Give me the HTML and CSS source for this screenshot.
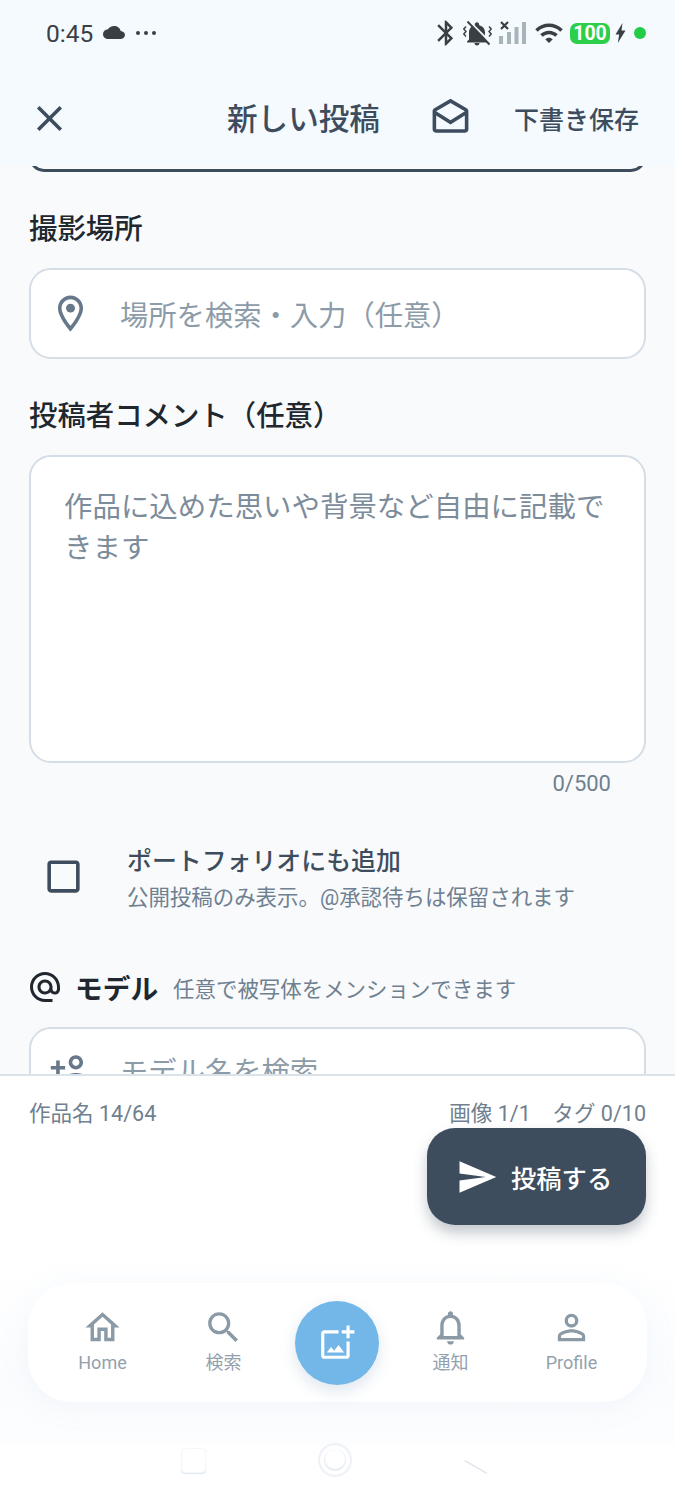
FILE: index.html
```html
<!DOCTYPE html>
<html lang="ja">
<head>
    <meta charset="UTF-8">
    <meta name="viewport" content="width=device-width, initial-scale=1.0">
    <title>新しい投稿</title>
    <link rel="stylesheet" href="styles.css">
</head>
<body>

<div class="page">
    <header class="top">
        <div class="status">
            <span class="clock">0:45</span>
            <svg class="ic-cloud" viewBox="0 4 24 16" preserveAspectRatio="none"><path d="M19.35 10.04C18.67 6.59 15.64 4 12 4 9.11 4 6.6 5.64 5.35 8.04 2.34 8.36 0 10.91 0 14c0 3.31 2.69 6 6 6h13c2.76 0 5-2.24 5-5 0-2.64-2.05-4.78-4.65-4.96z"/></svg>
            <span class="dots"><i></i><i></i><i></i></span>
            <span class="status-right">
                <svg class="ic-bt" viewBox="0 0 24 24"><path d="M17.71 7.71 12 2h-1v7.59L6.41 5 5 6.41 10.59 12 5 17.59 6.41 19 11 14.41V22h1l5.71-5.71-4.3-4.29 4.3-4.29zM13 5.83l1.88 1.88L13 9.59V5.83zm1.88 10.46L13 18.17v-3.76l1.88 1.88z"/></svg>
                <svg class="ic-mute" viewBox="0 0 29 25">
                    <path d="M14 24.500c1.400 0 2.500-1 2.500-2.500h-5c0 1.500 1.100 2.500 2.500 2.500zM22 18.500V11.500c0-3.800-2.200-6.500-5.800-7.300V3.500c0-1.200-1-2.200-2.200-2.200s-2.200 1-2.200 2.200v.700C8.200 5 6 7.700 6 11.500v7l-2 2v1h20v-1z"/>
                    <path class="gap" d="M6 0l22 22"/>
                    <path class="slash" d="M4.500 .500l22 23"/>
                    <path class="sq" d="M3 5.500 .800 8 3 10.500.800 13 3 15.500M26 5.500 28.200 8 26 10.500 28.200 13 26 15.500"/>
                </svg>
                <svg class="ic-signal" viewBox="0 0 27 25">
                    <rect class="off" x="0" y="15" width="4" height="8"/>
                    <rect class="off" x="8" y="11" width="4" height="12"/>
                    <rect class="off" x="15.500" y="6" width="4" height="17"/>
                    <rect class="off" x="23" y="1" width="4" height="22"/>
                    <path class="x" d="M2 1l7 7M9 1 2 8"/>
                </svg>
                <svg class="ic-wifi" viewBox="0 0 24 24"><path d="M1 9l2 2c4.970-4.970 13.030-4.970 18 0l2-2C16.930 2.930 7.080 2.930 1 9zm8 8 3 3 3-3c-1.650-1.660-4.340-1.660-6 0zm-4-4 2 2c2.760-2.760 7.240-2.760 10 0l2-2C15.140 9.140 8.870 9.140 5 13z"/></svg>
                <span class="battery">100</span>
                <svg class="ic-bolt" viewBox="0 0 11 20"><path d="M7.500 0 .500 11.500h3.700L2.800 20 10.500 7.500H6.500z"/></svg>
                <i class="green-dot"></i>
            </span>
        </div>
        <div class="toolbar">
            <svg class="ic-close" viewBox="0 0 24 24"><path d="M19 6.410 17.590 5 12 10.590 6.410 5 5 6.410 10.590 12 5 17.590 6.410 19 12 13.410 17.590 19 19 17.590 13.410 12z"/></svg>
            <h1 class="title">新しい投稿</h1>
            <svg class="ic-mail" viewBox="0 0 24 24"><path d="M21.990 8c0-.720-.370-1.350-.940-1.700L12 1 2.950 6.300C2.380 6.650 2 7.280 2 8v10c0 1.100.900 2 2 2h16c1.100 0 2-.900 2-2l-.010-10zM19.990 8v.010L12 13 4 8l8-4.680L19.990 8zM4 18v-7.660l8 5.020 7.990-4.990L20 18H4z"/></svg>
            <span class="save">下書き保存</span>
        </div>
    </header>

    <main class="scroll">
        <div class="clipped"></div>

        <label class="label" for="place">撮影場所</label>
        <div class="field">
            <svg class="ic-field" viewBox="0 0 24 24"><path d="M12 2C8.130 2 5 5.130 5 9c0 5.250 7 13 7 13s7-7.750 7-13c0-3.870-3.130-7-7-7zM7 9c0-2.760 2.240-5 5-5s5 2.240 5 5c0 2.880-2.880 7.190-5 9.880C9.920 16.210 7 11.850 7 9z"/><circle cx="12" cy="9" r="2.500"/></svg>
            <input type="text" id="place" placeholder="場所を検索・入力（任意）">
        </div>

        <label class="label" for="comment">投稿者コメント（任意）</label>
        <textarea class="comment" id="comment" placeholder="作品に込めた思いや背景など自由に記載できます"></textarea>
        <div class="counter">0/500</div>

        <div class="option">
            <svg class="ic-check" viewBox="0 0 24 24"><path d="M19 5v14H5V5h14m0-2H5c-1.100 0-2 .900-2 2v14c0 1.100.900 2 2 2h14c1.100 0 2-.900 2-2V5c0-1.100-.900-2-2-2z"/></svg>
            <div>
                <div class="option-title">ポートフォリオにも追加</div>
                <div class="option-sub">公開投稿のみ表示。@承認待ちは保留されます</div>
            </div>
        </div>

        <div class="section">
            <svg class="ic-at" viewBox="0 0 24 24"><path d="M12 2C6.480 2 2 6.480 2 12s4.480 10 10 10h5v-2h-5c-4.340 0-8-3.660-8-8s3.660-8 8-8 8 3.660 8 8v1.430c0 .790-.710 1.570-1.500 1.570s-1.500-.780-1.500-1.570V12c0-2.760-2.240-5-5-5s-5 2.240-5 5 2.240 5 5 5c1.380 0 2.640-.560 3.540-1.470.650.890 1.770 1.470 2.960 1.470 1.970 0 3.500-1.600 3.500-3.570V12c0-5.520-4.480-10-10-10zm0 13c-1.660 0-3-1.340-3-3s1.340-3 3-3 3 1.340 3 3-1.340 3-3 3z"/></svg>
            <span class="section-title">モデル</span>
            <span class="section-sub">任意で被写体をメンションできます</span>
        </div>
        <div class="field field-model">
            <svg class="ic-field" viewBox="0 0 24 24"><path d="M15 12c2.210 0 4-1.790 4-4s-1.790-4-4-4-4 1.790-4 4 1.790 4 4 4zm0-6c1.100 0 2 .900 2 2s-.900 2-2 2-2-.900-2-2 .900-2 2-2zm0 8c-2.670 0-8 1.340-8 4v2h16v-2c0-2.660-5.330-4-8-4zm-6 4c.220-.720 3.310-2 6-2 2.700 0 5.800 1.290 6 2H9zm-3-3v-3h3v-2H6V7H4v3H1v2h3v3h2z"/></svg>
            <input type="text" placeholder="モデル名を検索">
        </div>
    </main>

    <footer class="bottom">
        <div class="counts">
            <span>作品名 14/64</span>
            <span>画像 1/1　タグ 0/10</span>
        </div>
        <div class="submit-row">
            <button type="button" class="submit">
                <svg viewBox="0 0 24 24"><path d="M2.010 21 23 12 2.010 3 2 10l15 2-15 2z"/></svg>
                投稿する
            </button>
        </div>

        <div class="nav-wrap">
            <nav class="nav">
                <a class="nav-item">
                    <svg viewBox="0 0 24 24"><path d="M12 5.690l5 4.500V18h-2v-6H9v6H7v-7.810l5-4.500M12 3L2 12h3v8h6v-6h2v6h6v-8h3L12 3z"/></svg>
                    Home
                </a>
                <a class="nav-item">
                    <svg viewBox="0 0 24 24"><path d="M15.500 14h-.790l-.280-.270C15.410 12.590 16 11.110 16 9.500 16 5.910 13.090 3 9.500 3S3 5.910 3 9.500 5.910 16 9.500 16c1.610 0 3.090-.590 4.230-1.570l.270.280v.790l5 4.990L20.490 19l-4.990-5zm-6 0C7.010 14 5 11.990 5 9.500S7.010 5 9.500 5 14 7.010 14 9.500 11.990 14 9.500 14z"/></svg>
                    検索
                </a>
                <div class="fab">
                    <svg viewBox="0 0 24 24"><path d="M18 20H4V6h9V4H4c-1.100 0-2 .900-2 2v14c0 1.100.900 2 2 2h14c1.100 0 2-.900 2-2v-9h-2v9zm-7.790-3.170-1.960-2.360L5.500 18h11l-3.540-4.710zM20 4V1h-2v3h-3c.010.010 0 2 0 2h3v2.990c.010.010 2 0 2 0V6h3V4h-3z"/></svg>
                </div>
                <a class="nav-item">
                    <svg viewBox="0 0 24 24"><path d="M12 22c1.100 0 2-.900 2-2h-4c0 1.100.900 2 2 2zm6-6v-5c0-3.070-1.630-5.640-4.500-6.320V4c0-.830-.670-1.500-1.500-1.500s-1.500.670-1.500 1.500v.680C7.640 5.360 6 7.920 6 11v5l-2 2v1h16v-1l-2-2zm-2 1H8v-6c0-2.480 1.510-4.500 4-4.500s4 2.020 4 4.500v6z"/></svg>
                    通知
                </a>
                <a class="nav-item">
                    <svg viewBox="0 0 24 24"><path d="M12 5.900a2.100 2.100 0 1 1 0 4.200 2.100 2.100 0 0 1 0-4.200m0 9c2.970 0 6.100 1.460 6.100 2.100v1.100H5.900V17c0-.640 3.130-2.100 6.100-2.100M12 4C9.790 4 8 5.790 8 8s1.790 4 4 4 4-1.790 4-4-1.790-4-4-4zm0 9c-2.670 0-8 1.340-8 4v3h16v-3c0-2.660-5.330-4-8-4z"/></svg>
                    Profile
                </a>
            </nav>
        </div>

        <div class="sys-nav">
            <i class="sys-square"></i>
            <i class="sys-circle"></i>
            <svg class="sys-back" viewBox="0 0 24 27"><path d="M.500 13.500 23 26.500V0z" fill="#ffffff"/><path class="edge" d="M.500 13.500 23 26.500"/></svg>
        </div>
    </footer>
</div>

</body>
</html>
```

FILE: styles.css
```css
* {
    box-sizing: border-box;
}

body {
    margin: 0;
    background-color: #ffffff;
    font-family: Roboto, "Noto Sans CJK JP", sans-serif;
    color: #3d4d5e;
}

svg {
    display: block;
    flex: none;
    fill: currentColor;
}

.page {
    height: 1500px;
    display: flex;
    flex-direction: column;
    overflow: hidden;
}

/* header */
.top {
    height: 166px;
    background-color: #f5faff;
}

.status {
    height: 66px;
    padding: 0 29px 0 46px;
    display: flex;
    align-items: center;
    color: #3a3f44;
}

.clock {
    font-size: 24.500px;
    width: 57px;
}

.ic-cloud {
    width: 22px;
    height: 13px;
    margin-top: -2px;
}

.dots {
    display: flex;
    gap: 4px;
    margin-left: 11px;
    margin-top: -1px;
}

.dots i {
    width: 4px;
    height: 4px;
    border-radius: 50%;
    background-color: #3a3f44;
}

.status-right {
    margin-left: auto;
    display: flex;
    align-items: center;
}

.ic-bt {
    width: 30px;
    height: 30px;
}

.ic-mute {
    width: 29px;
    height: 25px;
    margin-left: 2px;
}

.ic-mute .gap {
    fill: none;
    stroke: #f5faff;
    stroke-width: 2;
}

.ic-mute .slash {
    fill: none;
    stroke: currentColor;
    stroke-width: 2;
}

.ic-mute .sq {
    fill: none;
    stroke: currentColor;
    stroke-width: 1.400;
}

.ic-signal {
    width: 27px;
    height: 25px;
    margin-left: 7px;
}

.ic-signal .off {
    fill: #a9b3ba;
}

.ic-signal .x {
    fill: none;
    stroke: #3a3f44;
    stroke-width: 2.200;
}

.ic-wifi {
    width: 30px;
    height: 30px;
    margin-left: 8px;
}

.battery {
    width: 40px;
    height: 21px;
    margin-left: 6px;
    background-color: #2ccf4a;
    border-radius: 7px;
    color: #ffffff;
    font-size: 19.500px;
    font-weight: 700;
    line-height: 21px;
    text-align: center;
}

.ic-bolt {
    width: 11px;
    height: 20px;
    margin-left: 5px;
}

.green-dot {
    width: 12px;
    height: 12px;
    margin-left: 8px;
    border-radius: 50%;
    background-color: #22cc44;
}

.toolbar {
    height: 100px;
    display: flex;
    align-items: center;
    padding: 4px 36px 0 28px;
}

.ic-close {
    width: 43px;
    height: 43px;
}

.title {
    margin: 4px 0 0 156px;
    font-size: 30.600px;
    font-weight: 500;
    line-height: 40px;
    white-space: nowrap;
}

.ic-mail {
    width: 43px;
    height: 43px;
    margin-left: 49px;
}

.save {
    margin-left: auto;
    font-size: 25px;
    font-weight: 500;
    white-space: nowrap;
}

/* form */
.scroll {
    height: 908px;
    padding: 0 29px;
    overflow: hidden;
    background-color: #f8fafc;
}

.clipped {
    height: 30px;
    margin-top: -24px;
    border: 3px solid #3d4d5e;
    border-radius: 22px;
}

.label {
    display: block;
    margin: 37px 0 19px;
    padding-top: 2px;
    height: 40px;
    font-size: 28.400px;
    font-weight: 500;
    line-height: 38px;
    color: #20272e;
}

.field {
    height: 91px;
    display: flex;
    align-items: center;
    padding: 0 18px;
    background-color: #ffffff;
    border: 2px solid #d5dee6;
    border-radius: 22px;
    color: #66788a;
}

.ic-field {
    width: 43px;
    height: 43px;
}

.field-model .ic-field {
    margin-top: -6px;
}

.field input {
    flex: 1;
    min-width: 0;
    margin-left: 28px;
    padding: 5px 0 0;
    border: none;
    outline: none;
    background: none;
    font: inherit;
    font-size: 28.300px;
}

.field-model input {
    padding: 0;
}

.field input::placeholder {
    color: #8c9ba8;
}

.comment {
    display: block;
    width: 100%;
    height: 308px;
    padding: 31px 33px;
    background-color: #ffffff;
    border: 2px solid #d5dee6;
    border-radius: 22px;
    outline: none;
    resize: none;
    font: inherit;
    font-size: 28.450px;
    line-height: 40.500px;
}

.comment::placeholder {
    color: #7c8c9a;
}

.counter {
    padding: 7px 35px 0 0;
    text-align: right;
    font-size: 22px;
    line-height: 28px;
    color: #6f8090;
}

.option {
    display: flex;
    align-items: center;
    margin-top: 46px;
    padding-left: 13px;
}

.ic-check {
    width: 43px;
    height: 43px;
    margin-top: -6px;
    margin-right: 42px;
}

.option-title {
    font-size: 24.900px;
    font-weight: 500;
    line-height: 36px;
}

.option-sub {
    margin-top: 2px;
    font-size: 21.450px;
    line-height: 32px;
    color: #6f8090;
}

.section {
    display: flex;
    align-items: center;
    margin: 53px 0 20px;
    height: 40px;
}

.ic-at {
    width: 36px;
    height: 36px;
    margin-left: -2px;
    color: #20272e;
}

.section-title {
    margin-left: 12px;
    font-size: 27.700px;
    font-weight: 700;
    color: #20272e;
}

.section-sub {
    margin-left: 15px;
    font-size: 21.450px;
    color: #6f8090;
}

/* bottom */
.bottom {
    flex: 1;
    background: linear-gradient(to bottom, #ffffff 185px, #fbfcfe 300px, #fcfdfe 366px, #ffffff 372px);
    border-top: 2px solid #dbe3ea;
}

.counts {
    display: flex;
    justify-content: space-between;
    padding: 23px 29px 0;
    font-size: 21.550px;
    line-height: 30px;
    color: #6f8090;
}

.submit-row {
    display: flex;
    justify-content: flex-end;
    padding: 0 29px;
    margin-top: -1px;
}

.submit {
    width: 219px;
    height: 97px;
    display: flex;
    align-items: center;
    padding: 0 0 0 29px;
    border: none;
    border-radius: 28px;
    background-color: #3d4d5e;
    color: #ffffff;
    font: inherit;
    font-size: 25.300px;
    font-weight: 500;
    box-shadow: 0 8px 14px rgba(61, 77, 94, 0.3);
}

.submit svg {
    width: 42px;
    height: 42px;
    margin-right: 13px;
}

.nav-wrap {
    margin-top: 58px;
    padding: 0 28px;
}

.nav {
    height: 119px;
    display: grid;
    grid-template-columns: 121px 121px 106px 121px 121px;
    align-items: center;
    padding: 0 15px 0 14px;
    background-color: #ffffff;
    border-radius: 44px;
    box-shadow: 0 4px 30px rgba(120, 160, 200, 0.08);
}

.nav-item {
    display: flex;
    flex-direction: column;
    align-items: center;
    padding-bottom: 3px;
    font-size: 18px;
    line-height: 24px;
    color: #93a1ad;
}

.nav-item svg {
    width: 41px;
    height: 41px;
    margin-bottom: 3px;
    color: #8a9aa6;
}

.fab {
    width: 84px;
    height: 84px;
    margin: 0 auto;
    display: flex;
    align-items: center;
    justify-content: center;
    border-radius: 50%;
    background-color: #72b7e8;
    color: #ffffff;
    box-shadow: 0 6px 16px rgba(90, 130, 170, 0.2);
}

.fab svg {
    width: 38px;
    height: 38px;
}

.sys-nav {
    display: flex;
    align-items: center;
    padding: 41px 0 0 181px;
}

.sys-square {
    width: 25px;
    height: 25px;
    border-radius: 4px;
    background-color: #ffffff;
    border: 1px solid #f5f7fa;
    box-shadow: 0 1px 1px #dfe7ef;
}

.sys-circle {
    width: 34px;
    height: 34px;
    margin-left: 112px;
    border-radius: 50%;
    border: 2px solid #eef2f7;
    box-shadow: inset 0 0 0 4px #ffffff, inset 0 -1px 0 5px #e9eef4;
}

.sys-back {
    width: 24px;
    height: 27px;
    margin-left: 112px;
}

.sys-back .edge {
    fill: none;
    stroke: #e1e8f0;
    stroke-width: 1.500;
}
```
